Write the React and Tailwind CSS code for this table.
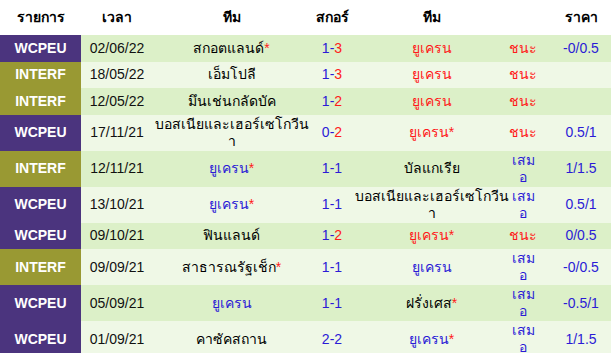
import React from "react";

const rows = [
  { cup: "WCPEU", date: "02/06/22", home: ["สกอตแลนด์", "black", true], score: ["1", "3", false, true], away: ["ยูเครน", "red", false], res: "ชนะ", odds: "-0/0.5" },
  { cup: "INTERF", date: "18/05/22", home: ["เอ็มโปลี", "black", false], score: ["1", "3", false, true], away: ["ยูเครน", "red", false], res: "ชนะ", odds: "" },
  { cup: "INTERF", date: "12/05/22", home: ["มึนเช่นกลัดบัค", "black", false], score: ["1", "2", false, true], away: ["ยูเครน", "red", false], res: "ชนะ", odds: "" },
  { cup: "WCPEU", date: "17/11/21", home: ["บอสเนียและเฮอร์เซโกวีนา", "black", false], score: ["0", "2", false, true], away: ["ยูเครน", "red", true], res: "ชนะ", odds: "0.5/1", tall: true },
  { cup: "INTERF", date: "12/11/21", home: ["ยูเครน", "blue", true], score: ["1", "1"], away: ["บัลแกเรีย", "black", false], res: "เสมอ", odds: "1/1.5", tall: true },
  { cup: "WCPEU", date: "13/10/21", home: ["ยูเครน", "blue", true], score: ["1", "1"], away: ["บอสเนียและเฮอร์เซโกวีนา", "black", false], res: "เสมอ", odds: "0.5/1", tall: true },
  { cup: "WCPEU", date: "09/10/21", home: ["ฟินแลนด์", "black", false], score: ["1", "2", false, true], away: ["ยูเครน", "red", true], res: "ชนะ", odds: "0/0.5" },
  { cup: "INTERF", date: "09/09/21", home: ["สาธารณรัฐเช็ก", "black", true], score: ["1", "1"], away: ["ยูเครน", "blue", false], res: "เสมอ", odds: "-0/0.5", tall: true },
  { cup: "WCPEU", date: "05/09/21", home: ["ยูเครน", "blue", false], score: ["1", "1"], away: ["ฝรั่งเศส", "black", true], res: "เสมอ", odds: "-0.5/1", tall: true },
  { cup: "WCPEU", date: "01/09/21", home: ["คาซัคสถาน", "black", false], score: ["2", "2"], away: ["ยูเครน", "blue", true], res: "เสมอ", odds: "1/1.5", tall: true },
];

const teamColor = {
  black: "text-black",
  red: "text-[#ff1a1a]",
  blue: "text-[#2b1bd6]",
};

const Team = ({ team }) => {
  const [name, color, star] = team;
  const parts = name === "บอสเนียและเฮอร์เซโกวีนา" ? ["บอสเนียและเฮอร์เซโกวีน", "า"] : [name];
  return (
    <span className={teamColor[color]}>
      {parts.length > 1 ? (
        <>
          {parts[0]}
          <br />
          {parts[1]}
        </>
      ) : (
        parts[0]
      )}
      {star && <span className="text-[#ff1a1a]">*</span>}
    </span>
  );
};

const App = () => {
  return (
    <div
      className="w-[611px] h-[353px] overflow-hidden bg-white"
      style={{ fontFamily: '"Liberation Sans", Arial, "Noto Sans", sans-serif' }}
    >
      <table className="w-[625px] table-fixed border-collapse text-[14px] leading-[17px]">
        <colgroup>
          <col className="w-[81px]" />
          <col className="w-[72px]" />
          <col className="w-[157px]" />
          <col className="w-[44px]" />
          <col className="w-[155px]" />
          <col className="w-[28px]" />
          <col className="w-[88px]" />
        </colgroup>
        <thead>
          <tr className="h-[35px] font-bold text-black">
            <th className="p-0">รายการ</th>
            <th className="p-0">เวลา</th>
            <th className="p-0">ทีม</th>
            <th className="p-0">สกอร์</th>
            <th className="p-0">ทีม</th>
            <th className="p-0"></th>
            <th className="p-0">ราคา</th>
          </tr>
        </thead>
        <tbody>
          {rows.map((r, i) => {
            const bg = i % 2 === 0 ? "bg-[#dcf0c8]" : "bg-[#eff8e6]";
            const draw = r.res === "เสมอ";
            return (
              <tr key={i} className={`${bg} ${r.tall ? "h-[36px]" : "h-[26.5px]"} text-center`}>
                <td
                  className={`p-0 font-bold text-white ${
                    r.cup === "WCPEU" ? "bg-[#4b347e]" : "bg-[#999933]"
                  }`}
                >
                  {r.cup}
                </td>
                <td className="p-0 text-[#111]">{r.date}</td>
                <td className="p-0 whitespace-nowrap">
                  <Team team={r.home} />
                </td>
                <td className="p-0 text-[#2b1bd6]">
                  {r.score[0]}-
                  <span className={r.score[3] ? "text-[#ff1a1a]" : ""}>{r.score[1]}</span>
                </td>
                <td className="p-0 whitespace-nowrap">
                  <Team team={r.away} />
                </td>
                <td className={`p-0 whitespace-nowrap ${draw ? "text-[#2b1bd6]" : "text-[#ff1a1a]"}`}>
                  {draw ? (
                    <>
                      เสม
                      <br />อ
                    </>
                  ) : (
                    r.res
                  )}
                </td>
                <td className="p-0 text-[#2b1bd6]">{r.odds}</td>
              </tr>
            );
          })}
        </tbody>
      </table>
    </div>
  );
};

export default App;
